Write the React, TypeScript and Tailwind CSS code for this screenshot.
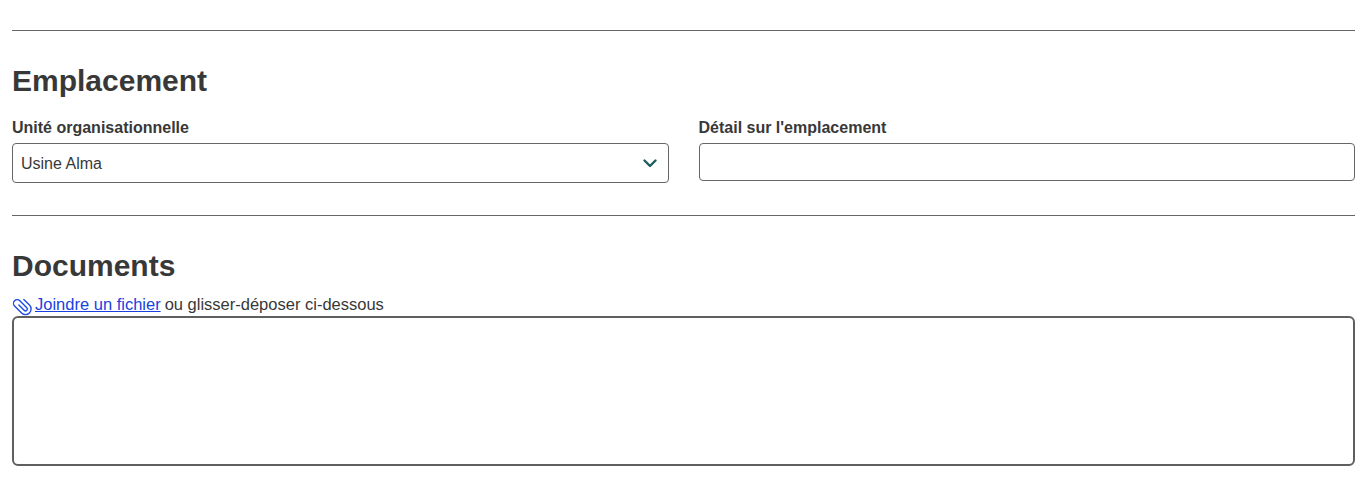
export default function App() {
  return (
    <div className="h-[488px] overflow-hidden bg-white pl-3 pr-[5px] pt-[30px] font-['Liberation_Sans',Arial,sans-serif] text-[#383838]">
      <hr className="border-t border-[#666666]" />
      <h2 className="mt-[32px] text-[30px] leading-[36px] font-bold">Emplacement</h2>
      <div className="mt-[20px] flex items-start gap-[30px]">
        <div className="flex-1">
          <label className="block text-[16px] leading-[18px] font-bold">Unité organisationnelle</label>
          <div className="mt-[6px] flex h-[40px] items-center justify-between rounded-[4px] border border-[#666666] pl-2 pr-[10px] text-[16px]">
            <span className="pt-[2px]">Usine Alma</span>
            <svg width="16" height="16" viewBox="0 0 16 16" fill="none" stroke="#1f5c5c" strokeWidth="2.4" strokeLinecap="round" strokeLinejoin="round">
              <path d="M2.5 5.5L8 11l5.500-5.500" />
            </svg>
          </div>
        </div>
        <div className="flex-1">
          <label className="block text-[16px] leading-[18px] font-bold">Détail sur l'emplacement</label>
          <input className="mt-[6px] block h-[38px] w-full rounded-[4px] border border-[#666666]" />
        </div>
      </div>
      <hr className="mt-[32px] border-t border-[#666666]" />
      <h2 className="mt-[32px] text-[30px] leading-[36px] font-bold">Documents</h2>
      <div className="mt-[10px] flex items-center text-[16.500px] leading-[20px]">
        <svg width="20" height="20" viewBox="1.300 1.300 21.400 21.400" fill="none" stroke="#1d4be6" strokeWidth="1.500" strokeLinecap="round" strokeLinejoin="round" className="mr-[3px] translate-x-[0.500px] translate-y-[2px]">
          <path transform="rotate(-45 12 12)" d="M10 8.500v8a2 2 0 0 0 4 0V6a4 4 0 0 0-8 0v10.500a6 6 0 0 0 12 0V8" />
        </svg>
        <a href="#" className="text-[#1a3fe0] underline">Joindre un fichier</a>
        <span className="ml-1">ou glisser-déposer ci-dessous</span>
      </div>
      <div className="mt-[2px] h-[150px] rounded-[6px] border-2 border-[#5f5f5f]" />
    </div>
  );
}
